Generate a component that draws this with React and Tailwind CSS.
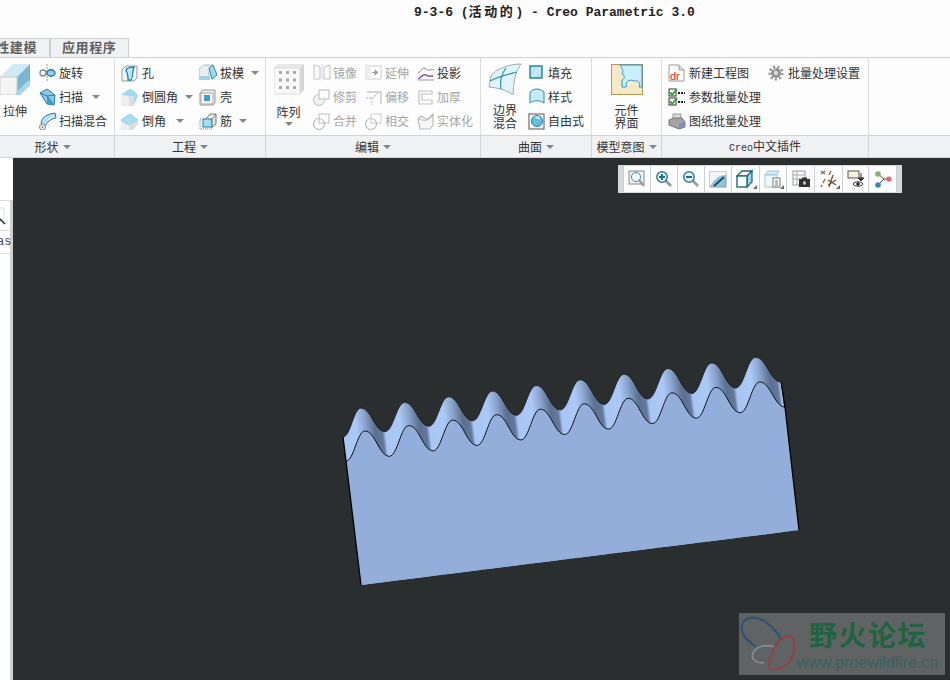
import React from "react";

const CJK = { fontFamily: '"Noto Sans CJK SC", "Liberation Sans", sans-serif' };

// wave edges of the gear rack, page coordinates
const wave = (start, peak, trough, end, n, dp, dt, period) => {
  let pts = [start];
  for (let i = 0; i < n; i++) {
    pts.push([peak[0] + i * period, peak[1] + i * dp]);
    if (i < n - 1) pts.push([trough[0] + i * period, trough[1] + i * dt]);
  }
  pts.push(end);
  let d = `M${pts[0][0]} ${pts[0][1]}`;
  for (let i = 1; i < pts.length; i++) {
    const [x0, y0] = pts[i - 1];
    const [x1, y1] = pts[i];
    const dx = (x1 - x0) * 0.42;
    d += ` C${x0 + dx} ${y0} ${x1 - dx} ${y1} ${x1} ${y1}`;
  }
  return d;
};

const back = wave([343, 437], [361, 408], [385, 431.7], [781, 382], 10, -5.63, -5.46, 43.85);
const front = wave([346, 461], [365, 431], [389.3, 456.3], [785, 407], 10, -5.45, -5.45, 43.87);

const Caret = ({ className = "" }) => (
  <svg width="8" height="4" viewBox="0 0 8 4" className={"shrink-0 " + className}>
    <path d="M0 0H8L4 4Z" fill="#858585" />
  </svg>
);

const I = ({ children, size = 18, box = 18 }) => (
  <svg width={size} height={size} viewBox={`0 0 ${box} ${box}`} className="shrink-0">
    {children}
  </svg>
);

const icons = {
  rotate: (
    <I>
      <path d="M8 0V18" stroke="#999" strokeDasharray="2 1" />
      <ellipse cx="4" cy="9" rx="3" ry="3" fill="#fff" stroke="#888" strokeWidth="1.4" />
      <ellipse cx="12" cy="9" rx="4" ry="3.2" fill="#8fd0ea" stroke="#1d7fb0" strokeWidth="1.4" />
    </I>
  ),
  sweep: (
    <I>
      <path d="M1 5 8 1 16 7 15 17 8 16Z" fill="#8cc9e2" stroke="#1d7fb0" />
      <path d="M1 5 8 8 15 17M8 8 16 7" fill="none" stroke="#2a7fa6" />
      <path d="M8 8 15 17 8 16Z" fill="#3f9cc4" />
    </I>
  ),
  blend: (
    <I>
      <path d="M2 11C3 5 8 2 16 1L17 6C11 7 8 10 6 15Z" fill="#b5e0f0" stroke="#1d7fb0" />
      <path d="M9 8 15 4" stroke="#fff" />
      <circle cx="3.5" cy="15" r="3" fill="#eee" stroke="#888" />
      <circle cx="3.5" cy="15" r="0.8" fill="#555" />
    </I>
  ),
  hole: (
    <I>
      <path d="M1 6 5 2H16V14L13 17H1Z" fill="#f4f4f4" stroke="#999" />
      <path d="M5 7C5 3 11 3 13 3L12 7C12 7 11 16 10 16H7C7 12 7 9 5 7Z" fill="#bde6f4" stroke="#1689b8" strokeWidth="1.3" />
    </I>
  ),
  round: (
    <I size={18}>
      <path d="M0 7 8 5V18H0Z" fill="#eee" />
      <path d="M0 7C5 3 8 1 9 1C13 2 16 5 17 8L13 17C13 10 8 7 0 7Z" fill="#9fd9ef" />
      <path d="M8 18H13V8L8 8Z" fill="#ddd" />
    </I>
  ),
  chamfer: (
    <I>
      <path d="M0 8 6 7 8 18H0Z" fill="#eee" />
      <path d="M0 8 9 2 17 8 8 13Z" fill="#a5dff2" stroke="#6cb8d4" strokeWidth=".6" />
      <path d="M8 13 17 8V12L12 18H8Z" fill="#ddd" />
    </I>
  ),
  draft: (
    <I>
      <path d="M0 5 5 1H14L10 6V14H0Z" fill="#e8eef0" stroke="#bbb" />
      <path d="M0 12H11V16H0Z" fill="#9fd4e8" />
      <path d="M10 4 14 1 18 11 13 15Z" fill="#9ddcf0" stroke="#1e8ab4" />
    </I>
  ),
  shell: (
    <I>
      <path d="M1 5 4 2H16V15L14 17H1Z" fill="#eee" stroke="#999" />
      <path d="M2 5H14V16H2Z" fill="#fafafa" stroke="#aaa" />
      <path d="M5 7H11V13H5Z" fill="#3f9cc4" />
    </I>
  ),
  rib: (
    <I>
      <path d="M1 7H13V17H1Z" fill="#f4f4f4" stroke="#888" strokeDasharray="1 1" />
      <path d="M4 7 13 7V15H4Z" fill="#9fe0f3" stroke="#1d7fb0" />
      <path d="M13 7 17 2V12L13 15ZM7 7 11 2H17" fill="#e4e4e4" stroke="#777" />
    </I>
  ),
  mirror: (
    <I>
      <path d="M1 1 7 3V15H1ZM17 1 11 3V15H17Z" fill="#fafafa" stroke="#c4c4c4" />
      <path d="M9 0V17" stroke="#ddd" />
    </I>
  ),
  trim: (
    <I>
      <circle cx="6" cy="12" r="5.5" fill="#f2f2f2" stroke="#c8c8c8" strokeWidth="1.2" />
      <rect x="6" y="2" width="10" height="9" fill="#fafafa" stroke="#bbb" />
    </I>
  ),
  merge: (
    <I>
      <rect x="6" y="2" width="10" height="9" fill="#fff" stroke="#bbb" />
      <circle cx="6" cy="12" r="5.5" fill="none" stroke="#bbb" strokeWidth="1.2" />
    </I>
  ),
  extend: (
    <I>
      <rect x="1" y="2" width="15" height="13" fill="#fff" stroke="#ccc" />
      <rect x="1" y="2" width="5" height="13" fill="#eee" />
      <path d="M7 8.5H12M10 6 13 8.5 10 11Z" stroke="#999" fill="#999" />
    </I>
  ),
  offset: (
    <I>
      <path d="M2 4H16V16" fill="none" stroke="#c6c6c6" strokeWidth="1.4" />
      <path d="M1 10H7L13 5" fill="none" stroke="#aaa" strokeDasharray="2 1" />
      <path d="M7 10V17" stroke="#bbb" strokeDasharray="2 1" />
    </I>
  ),
  intersect: (
    <I>
      <rect x="6" y="2" width="10" height="9" fill="#fff" stroke="#ccc" />
      <circle cx="6" cy="12" r="5.5" fill="none" stroke="#bbb" strokeWidth="1.2" />
    </I>
  ),
  project: (
    <I>
      <path d="M1 9C4 8 5 3 8 4C10 5 10 7 13 6 15 5 16 6 17 6" fill="none" stroke="#8a8a8a" />
      <path d="M1 15C4 14 6 9 9 11 11 13 13 12 16 12" fill="none" stroke="#7b36b5" strokeWidth="1.3" />
      <path d="M1 16H17" stroke="#999" />
    </I>
  ),
  thicken: (
    <I>
      <path d="M2 3H15V6H5V12H15V16H2Z" fill="#fafafa" stroke="#c4c4c4" strokeWidth="1.2" />
    </I>
  ),
  solidify: (
    <I>
      <path d="M1 7 4 4C8 6 10 9 12 6L16 2V13L13 17H3Z" fill="#f6f6f6" stroke="#bbb" strokeWidth="1.2" />
      <path d="M2 7C6 8 10 11 16 3" fill="none" stroke="#bbb" />
    </I>
  ),
  fill: (
    <I>
      <rect x="2" y="2" width="12" height="12" fill="#b8e4f3" stroke="#1c7da6" strokeWidth="1.4" />
      <path d="M4 12 12 4M7 12 12 7" stroke="#e6f7fc" />
    </I>
  ),
  style: (
    <I>
      <path d="M2 4C6 0 12 0 16 4V15C12 12 6 12 2 15Z" fill="#c4ecf8" stroke="#2a88ae" />
    </I>
  ),
  free: (
    <I>
      <rect x="1" y="2" width="15" height="15" fill="none" stroke="#555" />
      <circle cx="9" cy="9" r="5.5" fill="#63bfdf" stroke="#1c7da6" />
      <path d="M6 5 11 4 12 8Z" fill="#cdeef8" />
    </I>
  ),
  newdr: (
    <I size={18}>
      <path d="M1 1H11L16 6V17H1Z" fill="#fff" stroke="#999" />
      <path d="M11 1V6H16" fill="#ddd" stroke="#999" />
      <text x="2" y="16" fontSize="11" fill="#e5202a" fontFamily="Liberation Sans">dr</text>
    </I>
  ),
  params: (
    <I>
      <rect x="1" y="1" width="7" height="7" fill="#fff" stroke="#333" />
      <rect x="1" y="10" width="7" height="7" fill="#fff" stroke="#333" />
      <path d="M2 4 4 7 9 1M2 13 4 16 9 10" fill="none" stroke="#2da12d" strokeWidth="1.8" />
      <path d="M10 5H17M10 14H17" stroke="#222" strokeWidth="2" strokeDasharray="2 1" />
    </I>
  ),
  printer: (
    <I>
      <path d="M5 2H13V8H5Z" fill="#ddd" stroke="#999" />
      <path d="M1 8 6 6H14L17 10V15L11 17 1 13Z" fill="#a4a4a4" stroke="#777" />
      <path d="M11 12 16 10V14L11 16Z" fill="#6f8fc8" />
    </I>
  ),
  gear: (
    <I>
      <circle cx="9" cy="9" r="5" fill="#8e8e8e" />
      <circle cx="9" cy="9" r="6.4" fill="none" stroke="#8e8e8e" strokeWidth="2.2" strokeDasharray="2.2 2.2" />
      <circle cx="9" cy="9" r="2.2" fill="#dcdcdc" />
      <path d="M5 6 9 4 8 7Z" fill="#c4c4c4" />
    </I>
  ),
};

const Item = ({ icon, text, off, caret, wide }) => (
  <div className={"flex h-6 items-center gap-[2px] text-[12px] " + (off ? "text-[#a6a6a6]" : "text-[#333]")}>
    {icons[icon]}
    <span className={"whitespace-nowrap " + (wide ? "ml-[1px]" : "")}>{text}</span>
    {caret && <Caret className={caret} />}
  </div>
);

const Col = ({ className = "", children }) => <div className={"flex flex-col shrink-0 " + className}>{children}</div>;

const Big = ({ className = "", icon, text, caret, gap = "mt-[9px]" }) => (
  <div className={"flex flex-col items-center shrink-0 text-[12px] text-[#333] " + className}>
    <div className="h-[34px] flex items-end justify-center">{icon}</div>
    <div className={"leading-[13px] text-center whitespace-pre-line " + gap}>{text}</div>
    {caret && <Caret className="mt-[4px]" />}
  </div>
);

const Group = ({ w, children }) => (
  <div className={"flex shrink-0 h-[77px] overflow-hidden border-r border-[#dcdddf] pt-[3px] " + w}>{children}</div>
);

const Label = ({ w, text, caret = true, mono }) => (
  <div className={"flex shrink-0 h-[21px] items-center justify-center gap-1 border-r border-[#d2d3d6] text-[12px] text-[#333] " + w}>
    {mono ? (
      <span className="whitespace-nowrap">
        <span className="text-[10px]" style={{ fontFamily: '"Liberation Mono", monospace' }}>Creo</span>中文插件
      </span>
    ) : (
      <span>{text}</span>
    )}
    {caret && <Caret />}
  </div>
);

const ToolBtn = ({ w, children, corner }) => (
  <div className={"relative flex h-full items-center justify-center border-l border-[#c9d0d2] " + w}>
    {children}
    {corner && <span className="absolute right-[2px] bottom-[3px] w-0 h-0 border-l-[4px] border-l-transparent border-b-[4px] border-b-[#666]" />}
  </div>
);

const Lens = ({ sign }) => (
  <I>
    <path d="M10 10 16 16" stroke="#9a9a9a" strokeWidth="2.6" />
    <circle cx="7" cy="7" r="5.2" fill="#f2fbfe" stroke="#2a7d98" strokeWidth="1.5" />
    {sign && <path d="M4 7H10" stroke="#1d6d8c" strokeWidth="2" />}
    {sign === "+" && <path d="M7 4V10" stroke="#1d6d8c" strokeWidth="2" />}
  </I>
);

export default function App() {
  return (
    <div className="flex flex-col w-[950px] h-[680px] overflow-hidden bg-[#fdfdfd]" style={CJK}>
      {/* title */}
      <div className="h-[38px] shrink-0 pl-[414px] pt-[3px] text-[13px] font-bold text-[#222] whitespace-pre" style={{ fontFamily: '"Liberation Mono", "Noto Sans CJK SC", monospace' }}>
        9-3-6 (<span className="tracking-[2.6px]">活动的</span>) - Creo Parametric 3.0
      </div>

      {/* tabs */}
      <div className="flex h-[19px] shrink-0 items-stretch text-[13px] font-bold text-[#5f5f5f] tracking-[0.6px]">
        <div className="relative w-[51px] overflow-hidden border-r-2 border-t border-[#cdced0] bg-[#f0f1f3]">
          <span className="absolute right-[12px] top-[-2px] whitespace-nowrap">性建模</span>
        </div>
        <div className="w-[78px] border-r border-t border-[#cdced0] bg-[#f0f1f3] pl-[11px] leading-[16px] whitespace-nowrap">应用程序</div>
      </div>

      {/* ribbon */}
      <div className="flex shrink-0 border-t border-[#cfd0d2] bg-[#fdfdfd]">
        <Group w="w-[115px]">
          <Big
            className="w-[30px]"
            text="拉伸"
            icon={
              <svg width="30" height="31" viewBox="0 0 30 31" className="shrink-0">
                <path d="M0 13 13 0H30L17 13Z" fill="#cdeaf5" />
                <path d="M17 13 30 0V18L17 31Z" fill="#79b6d2" />
                <path d="M0 13H17V31H0Z" fill="#f4f4f4" stroke="#cfcfcf" />
                <path d="M17 31 30 18" stroke="#a8d6e8" strokeWidth="5" />
              </svg>
            }
          />
          <Col className="ml-[9px]">
            <Item icon="rotate" text="旋转" />
            <Item icon="sweep" text="扫描" caret="ml-[7px]" />
            <Item icon="blend" text="扫描混合" />
          </Col>
        </Group>
        <Group w="w-[151px] pl-[6px]">
          <Col className="w-[78px]">
            <Item icon="hole" text="孔" wide />
            <Item icon="round" text="倒圆角" caret="ml-[5px]" wide />
            <Item icon="chamfer" text="倒角" caret="ml-[8px]" wide />
          </Col>
          <Col>
            <Item icon="draft" text="拔模" caret="ml-[5px]" wide />
            <Item icon="shell" text="壳" wide />
            <Item icon="rib" text="筋" caret="ml-[5px]" wide />
          </Col>
        </Group>
        <Group w="w-[215px]">
          <Big
            className="w-[46px] pr-[1px]"
            text="阵列"
            gap="mt-[10px]"
            caret
            icon={
              <svg width="30" height="31" viewBox="0 0 30 31" className="shrink-0">
                <path d="M0 4 4 0H30L26 4Z" fill="#e8e8e8" />
                <path d="M26 4 30 0V26L26 30Z" fill="#d4d4d4" />
                <rect x="0" y="4" width="26" height="26" fill="#f8f8f8" stroke="#dcdcdc" />
                <path d="M5 8.5H8M12 8.5H15M19 8.5H22M5 16H8M12 16H15M19 16H22M5 23.5H8M12 23.5H15M19 23.5H22" stroke="#a9a9a9" strokeWidth="3" />
              </svg>
            }
          />
          <Col className="w-[52px] ml-[1px]">
            <Item icon="mirror" text="镜像" off />
            <Item icon="trim" text="修剪" off />
            <Item icon="merge" text="合并" off />
          </Col>
          <Col className="w-[52px]">
            <Item icon="extend" text="延伸" off />
            <Item icon="offset" text="偏移" off />
            <Item icon="intersect" text="相交" off />
          </Col>
          <Col>
            <Item icon="project" text="投影" />
            <Item icon="thicken" text="加厚" off />
            <Item icon="solidify" text="实体化" off />
          </Col>
        </Group>
        <Group w="w-[111px] pl-[6px]">
          <Big
            className="w-[36px]"
            text={"边界\n混合"}
            gap="mt-[8px]"
            icon={
              <svg width="34" height="32" viewBox="0 0 34 32" className="shrink-0">
                <path d="M3 13C9 5 22 1 33 1 30 6 26 10 25 32 17 26 9 25 1 24Z" fill="#dff3f9" stroke="#9aaab0" />
                <path d="M2 18C11 13 22 11 29 9M18 5C13 12 12 20 13 26" fill="none" stroke="#2f8fb8" strokeWidth="1.2" />
              </svg>
            }
          />
          <Col className="ml-[5px]">
            <Item icon="fill" text="填充" />
            <Item icon="style" text="样式" />
            <Item icon="free" text="自由式" />
          </Col>
        </Group>
        <Group w="w-[70px] justify-center">
          <Big
            className="w-full"
            text={"元件\n界面"}
            gap="mt-[8px]"
            icon={
              <svg width="32" height="31" viewBox="0 0 32 31" className="shrink-0">
                <rect x=".5" y=".5" width="31" height="30" fill="#f7e9c6" stroke="#b4975a" />
                <path d="M9 1H31V23H28C30 19 27 16 23 17 20 15 15 17 15 20 16 22 16 23 15 23H11V16C14 15 14 11 11 10 13 7 11 4 9 1Z" fill="#c8effb" stroke="#2f9ac4" />
              </svg>
            }
          />
        </Group>
        <Group w="w-[207px] pl-[6px]">
          <Col className="w-[99px]">
            <Item icon="newdr" text="新建工程图" wide />
            <Item icon="params" text="参数批量处理" wide />
            <Item icon="printer" text="图纸批量处理" wide />
          </Col>
          <Col>
            <Item icon="gear" text="批量处理设置" wide />
          </Col>
        </Group>
        <div className="flex-1" />
      </div>

      {/* group labels */}
      <div className="flex shrink-0 border-t border-b border-[#d2d3d6] bg-[#f0f1f3]">
        <Label w="w-[115px] pr-[9px]" text="形状" />
        <Label w="w-[151px]" text="工程" />
        <Label w="w-[215px]" text="编辑" />
        <Label w="w-[111px]" text="曲面" />
        <Label w="w-[70px]" text="模型意图" />
        <Label w="w-[207px]" mono caret={false} />
      </div>

      {/* main area */}
      <div className="flex flex-1 min-h-0">
        <div className="relative w-[13px] shrink-0 overflow-hidden bg-white">
          <div className="absolute left-0 right-0 top-[42px] bottom-0 border-t border-[#d8d8d8] border-r-[3px] border-r-[#cfd0d2] bg-white">
            <div className="h-[30px] border-b border-[#dcdcdc] pt-[6px]">
              <svg width="6" height="20" viewBox="0 0 6 20" className="block">
                <path d="M0 1H4V12H0" fill="#fff" stroke="#ddd" />
                <path d="M0 12 5 17" stroke="#333" strokeWidth="1.6" />
              </svg>
            </div>
            <div className="h-[23px] border-b border-[#dcdcdc] pt-[4px] text-[12px] leading-[15px] text-[#445] -ml-[3px]" style={{ fontFamily: '"Liberation Mono", monospace' }}>
              as
            </div>
          </div>
        </div>

        <div className="relative flex-1 bg-[#2a2e2f]">
          <svg className="absolute inset-0 w-full h-full" viewBox="13 158 937 522">
            <defs>
              <linearGradient id="flank" gradientUnits="userSpaceOnUse" x1="387" y1="445" x2="430.87" y2="439.55" spreadMethod="repeat">
                <stop offset="0" stopColor="#a8c6f3" />
                <stop offset="0.36" stopColor="#abc9f6" />
                <stop offset="0.56" stopColor="#8aa5cf" />
                <stop offset="0.78" stopColor="#5b6f8f" />
                <stop offset="0.93" stopColor="#64799b" />
                <stop offset="1" stopColor="#a8c6f3" />
              </linearGradient>
            </defs>
            <path d={back + " L799 530 L361 585 Z"} fill="url(#flank)" />
            <path d={front + " L799 530 L361 585 Z"} fill="#93aeda" />
            <path d={back} fill="none" stroke="#111" strokeWidth=".8" />
            <path d={front} fill="none" stroke="#111" strokeWidth="1" />
            <path d="M343 437 346 461 361 585M781 382 785 407 799 530" fill="none" stroke="#000" strokeWidth="1.3" />
          </svg>

          {/* view toolbar */}
          <div className="absolute left-[605px] top-[7px] flex w-[284px] h-[28px] border-x-[5px] border-y-[1px] border-x-[#d6d9db] border-y-[#d6d9db] bg-[#fdfdfd]">
            <ToolBtn w="w-[27px]">
              <I>
                <rect x="1" y="1" width="15" height="13" fill="#eee" stroke="#8a8a8a" />
                <circle cx="8" cy="7" r="4.5" fill="#eefafe" stroke="#3d8ca6" />
                <path d="M11 10 16 16" stroke="#9a9a9a" strokeWidth="2.4" />
              </I>
            </ToolBtn>
            <ToolBtn w="w-[27px]"><Lens sign="+" /></ToolBtn>
            <ToolBtn w="w-[27px]"><Lens sign="-" /></ToolBtn>
            <ToolBtn w="w-[27px]">
              <I>
                <rect x="1" y="2" width="16" height="15" fill="#8ec6da" stroke="#999" />
                <path d="M1 2H17V5C10 5 5 9 1 17Z" fill="#f4f4f4" />
                <path d="M5 16 15 7" stroke="#1f4f68" strokeWidth="2" />
              </I>
            </ToolBtn>
            <ToolBtn w="w-[28px]" corner>
              <I>
                <path d="M1 6 6 1H16L11 6Z" fill="#fff" stroke="#1b6a88" strokeWidth="1.3" />
                <path d="M11 6 16 1V12L11 17Z" fill="#9fd2e4" stroke="#1b6a88" strokeWidth="1.3" />
                <rect x="1" y="6" width="10" height="11" fill="#fff" stroke="#1b6a88" strokeWidth="1.4" />
              </I>
            </ToolBtn>
            <ToolBtn w="w-[28px]" corner>
              <I>
                <path d="M1 5 4 1H15L13 5Z" fill="#d2eaf3" stroke="#9fc8d8" />
                <rect x="1" y="5" width="12" height="12" fill="#eef7fa" stroke="#9fc8d8" />
                <rect x="9" y="8" width="7" height="9" fill="#fff" stroke="#777" />
                <path d="M11 11H14M11 13H14M11 15H14" stroke="#777" />
              </I>
            </ToolBtn>
            <ToolBtn w="w-[28px]">
              <I>
                <rect x="1" y="1" width="12" height="14" fill="#fafafa" stroke="#999" />
                <path d="M1 5H13M1 9H13M5 1V15" stroke="#aaa" />
                <rect x="7" y="9" width="11" height="8" fill="#333" />
                <rect x="10" y="7.5" width="5" height="2" fill="#333" />
                <circle cx="12.5" cy="13" r="2.4" fill="#bbb" stroke="#111" />
              </I>
            </ToolBtn>
            <ToolBtn w="w-[28px]" corner>
              <I>
                <path d="M1 1 5 4M1 4 5 1M11 1 9 5M5 9 3 13M2 15 1 17" stroke="#8a6b36" strokeWidth="1.4" />
                <path d="M13 5 9 17M8 10 16 15M16 10 8 15" stroke="#6b5228" strokeWidth="1.3" />
              </I>
            </ToolBtn>
            <ToolBtn w="w-[26px]">
              <I>
                <rect x="1" y="1" width="11" height="7" fill="#faf0d6" stroke="#555" />
                <path d="M14 3V8M11 8H17L14 11Z" fill="#333" stroke="#333" />
                <path d="M6 14C8 11 14 11 16 14 14 17 8 17 6 14Z" fill="#fff" stroke="#333" />
                <circle cx="11" cy="14" r="1.8" fill="#222" />
              </I>
            </ToolBtn>
            <ToolBtn w="w-[28px]">
              <I>
                <path d="M4 4 10 9 4 15M10 9H15" fill="none" stroke="#555" />
                <circle cx="4" cy="4" r="2.8" fill="#7cb56a" />
                <circle cx="4" cy="15" r="2.8" fill="#3f86b8" />
                <circle cx="15" cy="9" r="2.6" fill="#d8686a" />
              </I>
            </ToolBtn>
            <div className="flex-1 border-l border-[#c9d0d2]" />
          </div>

          {/* forum watermark */}
          <div className="absolute left-[726px] top-[455px] flex w-[206px] h-[62px] bg-[#5f6364]">
            <svg width="58" height="62" viewBox="0 0 58 62" className="shrink-0">
              <path d="M17 34C8 27 1 22 3 12 6 2 20 3 28 10 34 15 40 20 42 27" fill="none" stroke="#2f5374" strokeWidth="2.2" />
              <path d="M36 34C28 32 18 32 14 40 11 47 18 50 25 50" fill="none" stroke="#7f8a90" strokeWidth="1.8" />
              <path d="M52 23C58 30 56 45 47 52 41 57 33 57 30 56M52 23C44 22 38 28 35 36 32 44 29 50 30 56" fill="none" stroke="#963f41" strokeWidth="1.8" />
            </svg>
            <div className="flex flex-col">
              <div className="ml-[12px] mt-[4px] h-[34px] text-[28px] leading-[34px] font-bold tracking-[1.5px] text-[#1f6440] whitespace-nowrap">野火论坛</div>
              <div className="mt-[3px] text-[16px] leading-[18px] text-[#36625f] whitespace-nowrap" style={{ fontFamily: '"Liberation Sans", sans-serif' }}>www.proewildfire.cn</div>
            </div>
          </div>
        </div>
      </div>
    </div>
  );
}
